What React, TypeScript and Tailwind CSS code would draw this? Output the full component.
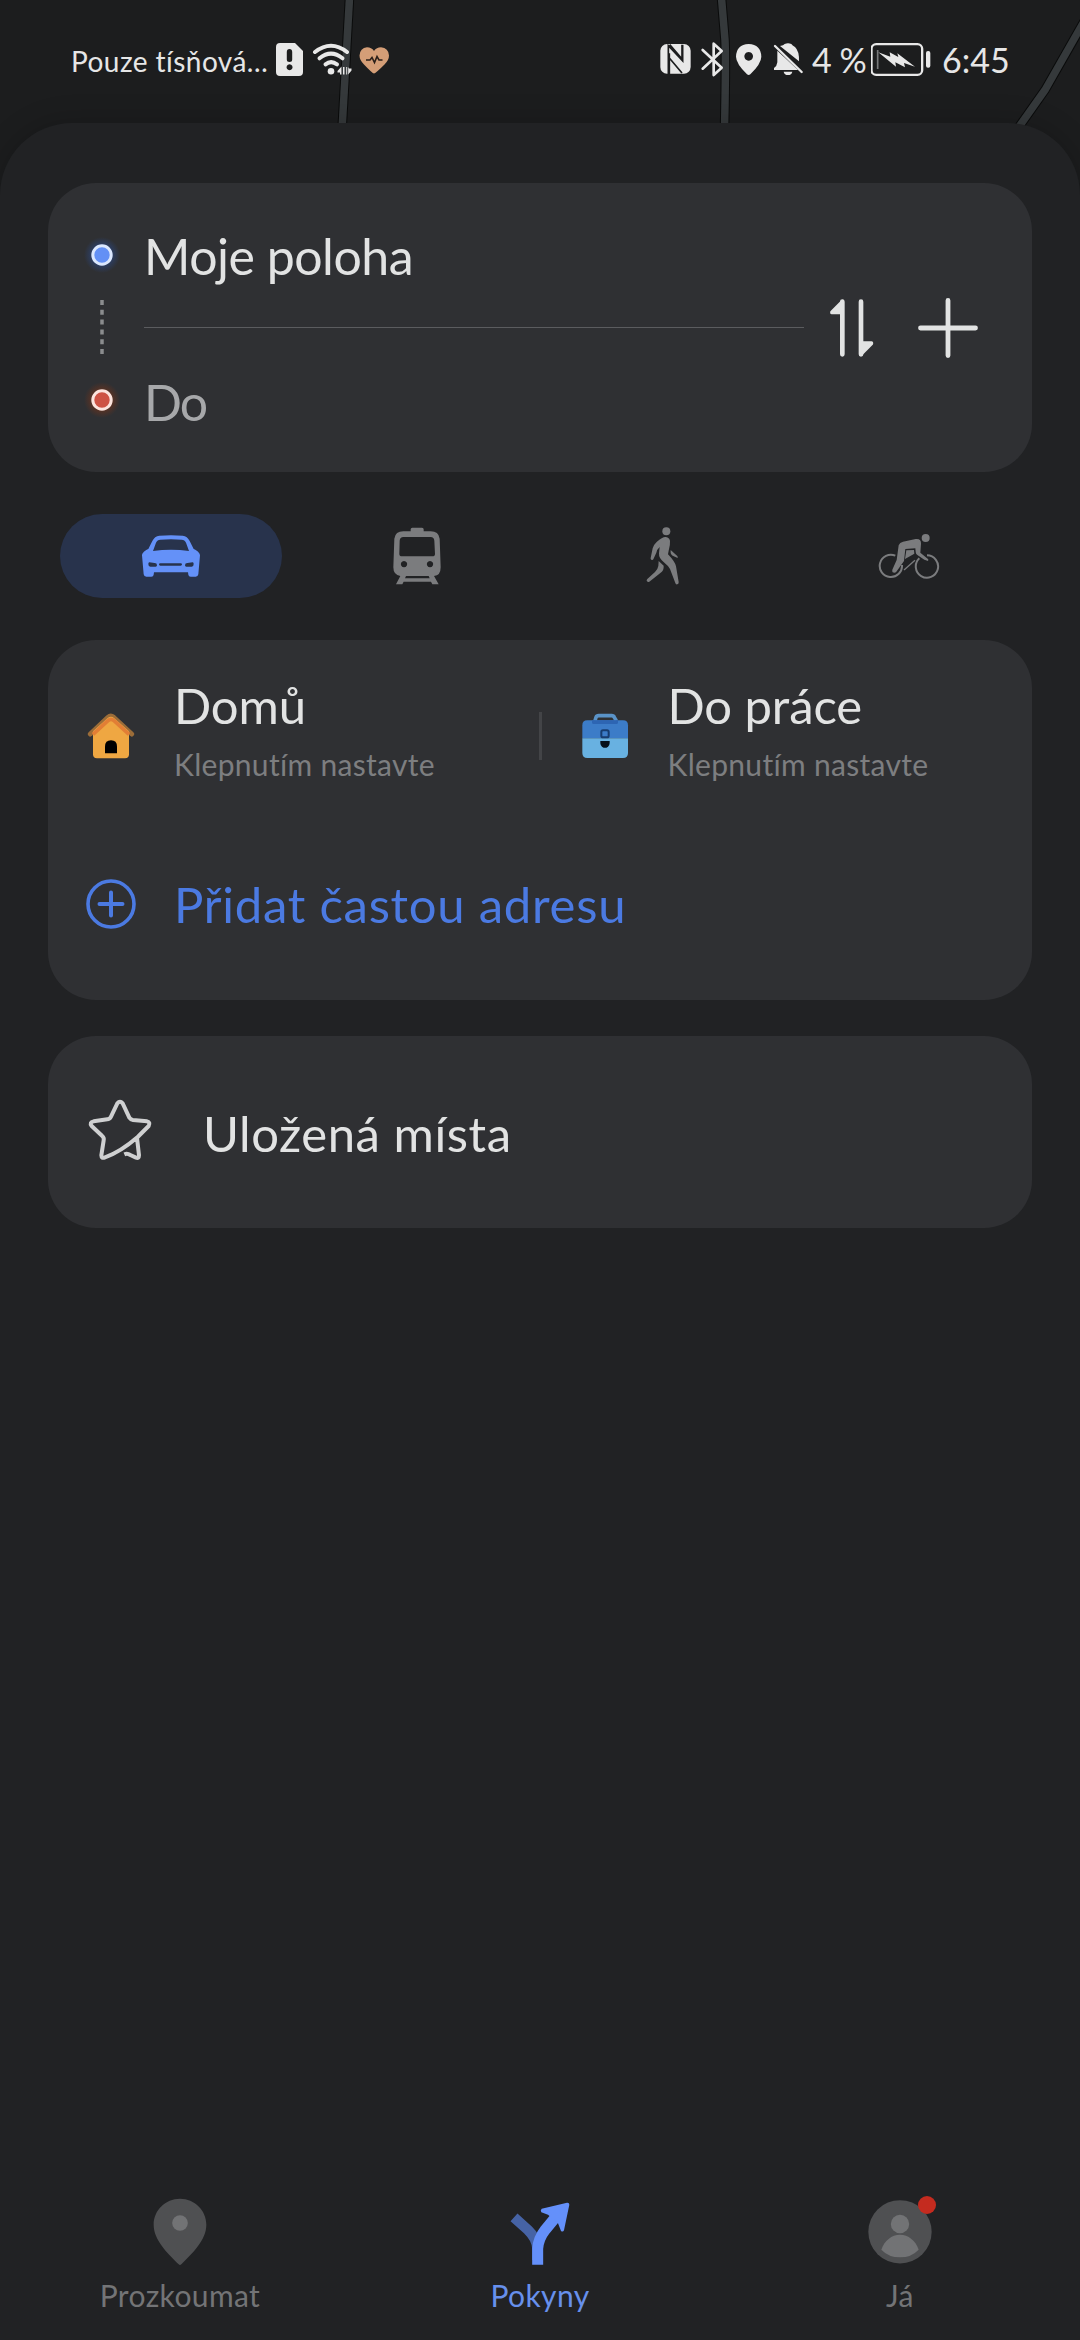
import React, { useState } from 'react';

type Mode = 'car' | 'transit' | 'walk' | 'bike';

const CarIcon = () => (
  <svg width="60" height="44" viewBox="303 101 180 132" fill="currentColor">
    <path
      fillRule="evenodd"
      d="M306 165C306 158 315 150 325 146L337 122Q344 107 358 106Q393 103 428 106Q442 107 449 122L461 146C471 150 480 158 480 165L475 222Q474 229 467 229H452Q446 229 445 223L444 216H342L341 223Q340 229 334 229H319Q312 229 311 222ZM339 152Q393 144 447 152L438 127Q434 118 425 118Q393 115 361 118Q352 118 348 127ZM328 186Q325 186 325 191Q325 199 331 199H347Q351 199 351 195Q351 188 344 188ZM458 186Q461 186 461 191Q461 199 455 199H439Q435 199 435 195Q435 188 442 188ZM361 189Q357 189 357 192.500Q357 196 361 196H422Q426 196 426 192.500Q426 189 422 189Z"
    />
  </svg>
);

const TrainIcon = () => (
  <svg width="50" height="60" viewBox="1056 76 150 180" fill="currentColor">
    <path
      fillRule="evenodd"
      d="M1112 92V86Q1112 81 1117 81H1146Q1151 81 1151 86V92H1172Q1196 92 1199 114L1202 200Q1202 225 1182 226L1196 251H1177L1173 243H1091L1087 251H1068L1081 226Q1060 223 1060 200L1063 114Q1066 92 1090 92ZM1090 109Q1080 109 1079 120L1078 160Q1078 167 1086 167H1177Q1185 167 1185 160L1183 120Q1182 109 1172 109ZM1092 181a9.500 9.500 0 1 0 .1 0ZM1170 181a9.500 9.500 0 1 0 .1 0ZM1098 226L1095 233H1169L1166 226Z"
    />
  </svg>
);

const WalkIcon = () => (
  <svg width="36" height="60" viewBox="136 78 108 180" fill="currentColor">
    <circle cx="200" cy="94" r="12" />
    <path d="M197 111Q208 111 211 122Q212 135 207 152L205 163Q226 185 229 199L237 246Q238 251 233 253Q228 254 227 249L211 207Q206 197 191 185Q177 174 178 160L180 141Q172 148 170 158L161 178Q159 181 155 179Q152 178 153 174L159 145Q162 134 171 126Q188 111 197 111Z" />
    <path d="M177 183L192 197Q193 212 183 218L149 245Q145 248 142 244Q139 241 143 237L166 216Q174 209 176 198Z" />
    <path d="M213 150L232 167Q235 170 234 174L219 167Q211 163 213 150Z" />
  </svg>
);

const BikeIcon = () => (
  <svg width="62" height="48" viewBox="834 96 186 144" fill="none" stroke="currentColor" strokeWidth="6">
    <circle cx="977" cy="114" r="12" fill="currentColor" stroke="none" />
    <path d="M886 167A33.500 33.500 0 1 0 906 195" />
    <path d="M958 175A33.500 33.500 0 1 0 981 166" />
    <path d="M912 210L945 181" strokeWidth="4" />
    <path
      fill="currentColor"
      stroke="none"
      d="M896 136Q899 127 909 125L947 117Q964 115 963 131L961 158L983 176Q987 179 984 183L973 179L951 164Q947 161 947 155L946 145L916 147L912 183L889 215Q885 220 878 217Q876 214 877 209L890 180Z"
    />
    <path fill="currentColor" stroke="none" d="M919 151L942 150L943 161L915 177Z" />
  </svg>
);

const HomeIcon = () => (
  <svg width="48" height="48" viewBox="141 245 144 144">
    <path d="M151 311L204 261Q212 254 221 261L275 311" fill="none" stroke="#9b6c38" strokeWidth="15" strokeLinecap="round" />
    <path d="M159 303L203 263Q213 255 222 263L267 303V372Q267 384 255 384H171Q159 384 159 372Z" fill="#efa742" />
    <path d="M159 312L204 271Q213 263 222 271L267 312" fill="none" stroke="#e27e35" strokeWidth="11" />
    <path d="M195 369V348Q195 330 213 330Q231 330 231 348V369Z" fill="#000" />
  </svg>
);

const WorkIcon = () => (
  <svg width="48" height="48" viewBox="180 188 144 144">
    <path d="M222 214L225 204Q227 199 233 199H272Q278 199 280 204L286 214" fill="none" stroke="#5a93c8" strokeWidth="11" />
    <path d="M184 267V228Q184 213 199 213H306Q321 213 321 228V267Z" fill="#3c7cc8" />
    <path d="M184 267H321V311Q321 326 306 326H199Q184 326 184 311Z" fill="#68b1e1" />
    <path d="M213 213H291V220Q291 224 286 224H218Q213 224 213 220Z" fill="#2d65b3" />
    <rect x="241" y="243" width="22" height="21" rx="5" fill="#3c7cc8" stroke="#173d70" strokeWidth="6" />
    <path d="M238 275H266V281Q266 288 261 292Q252 299 243 292Q238 288 238 281Z" fill="#06101c" />
  </svg>
);

const ExploreIcon = () => (
  <svg width="72" height="72" viewBox="252 48 216 216">
    <path d="M360 56C404 56 439 91 439 134C439 180 398 219 364 253Q360 257 356 253C322 219 281 180 281 134C281 91 316 56 360 56Z" fill="#4f5052" />
    <circle cx="360" cy="129" r="23.500" fill="#727375" />
  </svg>
);

const RouteIcon = () => (
  <svg width="72" height="72" viewBox="132 48 216 216">
    <path d="M162 112L204 150Q231 176 232 206V240" fill="none" stroke="#4663a5" strokeWidth="31" />
    <path d="M233 254V206Q235 176 256 149L288 110" fill="none" stroke="#6490fa" strokeWidth="33" />
    <path d="M245 86L321 68Q328 67 328 74L312 151Q309 157 303 153L294 130L264 104L244 97Q240 91 245 86Z" fill="#6490fa" />
  </svg>
);

const ProfileIcon = () => (
  <svg width="72" height="72" viewBox="102 48 216 216" className="overflow-visible">
    <circle cx="210" cy="155.500" r="95" fill="#4f5052" />
    <circle cx="210" cy="132" r="27.500" fill="#727375" />
    <path d="M154 209C163 182 185 164 210 164C235 164 257 182 266 209Q244 232 210 232Q176 232 154 209Z" fill="#727375" />
    <circle cx="291" cy="75" r="27" fill="#c42b1f" />
  </svg>
);

const StopDot = ({ fill, ring, glow }: { fill: string; ring: string; glow: string }) => (
  <svg width="48" height="48" viewBox="0 0 48 48">
    <defs>
      <radialGradient id={`glow-${glow.slice(1)}`}>
        <stop offset="0.5" stopColor={glow} stopOpacity="0.6" />
        <stop offset="1" stopColor={glow} stopOpacity="0" />
      </radialGradient>
    </defs>
    <circle cx="24" cy="24" r="18" fill={`url(#glow-${glow.slice(1)})`} />
    <circle cx="24" cy="24" r="9.200" fill={fill} stroke={ring} strokeWidth="3" />
  </svg>
);

const StatusBar = () => (
  <div className="relative flex h-[123px] items-start pt-[42px] pl-[71px] text-[#e6e6e6]">
    <span className="mt-[5px] w-[200px] text-[28px] leading-none tracking-[0.45px] whitespace-nowrap">Pouze tísňová…</span>
    <svg className="ml-[3px] shrink-0" width="120" height="36" viewBox="274 42 120 36" fill="#e8e8e8">
      <path fillRule="evenodd" d="M280 43H295L303 51V72Q303 76 299 76H280Q276 76 276 72V47Q276 43 280 43ZM289.500 49Q286.800 49 286.800 52V59.500Q286.800 62 289.500 62Q292.200 62 292.200 59.500V52Q292.200 49 289.500 49ZM289.500 64.300a3 3 0 1 0 .1 0Z" />
      <g fill="none" stroke="#e8e8e8" strokeWidth="4" strokeLinecap="round">
        <path d="M315 52Q331 39.500 347 52" />
        <path d="M319.500 58.300Q331 49 342.500 58.300" />
        <path d="M325.500 64.300Q331 60 337 64.300" />
      </g>
      <circle cx="331" cy="71.200" r="3.300" />
      <path d="M337.500 71L341.500 66.500V74.500H340V72.500H337.500ZM343 67H344.500V74.500H343ZM346.200 67H347.200V74.500H346.200ZM348.200 67V74.500L351.500 70.500V68.500H349Z" />
      <path d="M374 73.500Q372.500 73.500 364 64.500Q359.500 60 359.500 55.500Q360 48 367 47.300Q371.500 47.300 374 51Q376.500 47.300 381 47.300Q388.500 48 389 55.500Q389 60 384.500 64.500Q375.500 73.500 374 73.500Z" fill="#d49e77" />
      <path d="M366 60H370L372 57.500L374.500 62.500L377 56.500L379 60H382.500" fill="none" stroke="#2a1f19" strokeWidth="1.600" />
    </svg>

    <svg className="ml-[264px] shrink-0" width="146" height="36" viewBox="174 126 438 108" fill="#e8e8e8">
      {/* NFC */}
      <rect x="181" y="132" width="91" height="89" rx="20" />
      <path d="M205 222V137L248 183V134M209 134L247 178M208 160V222M208 174L246 219M246 134V178" fill="none" stroke="#1c1d1e" strokeWidth="5" />
      {/* Bluetooth */}
      <path d="M308 150L365 203L341 225V131L365 153L308 206" fill="none" stroke="#e8e8e8" strokeWidth="8" strokeLinejoin="round" strokeLinecap="round" />
      {/* Location */}
      <path fillRule="evenodd" d="M446 132Q483 134 484 170Q484 190 451 223Q446 227 441 223Q408 190 408 170Q409 134 446 132ZM446 156a13 13 0 1 0 .1 0Z" />
      {/* Muted bell */}
      <path d="M540 138Q551 136 554 132Q564 128 574 132Q577 136 585 141Q598 153 597 184ZM532 152L594 210H522V204Q531 198 532 187ZM551 215H577Q575 225 564 225Q553 225 551 215Z" />
      <path d="M525 138L605 216" stroke="#e8e8e8" strokeWidth="7" strokeLinecap="round" />
    </svg>
    <span className="mt-[1px] ml-2 w-[59px] shrink-0 text-[34px] leading-none tracking-[-0.4px] whitespace-nowrap">4 %</span>
    <svg className="shrink-0" width="62" height="36" viewBox="816 126 186 108">
      <rect x="817.500" y="132.500" width="152" height="92" rx="14" fill="none" stroke="#e8e8e8" strokeWidth="7" />
      <path d="M836 150V207" stroke="#77797a" strokeWidth="5" />
      <path d="M838 157L874 170L872 157L898 171L895 160L948 200L915 189L918 202L889 187L891 200Z" fill="#e8e8e8" />
      <rect x="981" y="153" width="13" height="50" rx="6" fill="#e8e8e8" />
    </svg>
    <span className="mt-[1px] ml-[9px] text-[34px] leading-none">6:45</span>
  </div>
);

const MapBackdrop = () => (
  <svg className="absolute top-0 left-0" width="1080" height="210" viewBox="0 0 1080 210" fill="none">
    <g stroke="#0a0b0b" strokeWidth="9.500">
      <path d="M349.500 -2L342 130" />
      <path d="M721.500 -2L725 40Q726 60 724.500 130" />
      <path d="M1086 18L1045 90L1016 131" />
    </g>
    <g stroke="#35393b" strokeWidth="7.500">
      <path d="M349.500 -2L342 130" />
      <path d="M721.500 -2L725 40Q726 60 724.500 130" />
      <path d="M1086 18L1045 90L1016 131" />
    </g>
  </svg>
);

const Place = ({ icon, title }: { icon: React.ReactNode; title: string }) => (
  <div className="flex flex-1 items-center pl-9">
    <div className="mt-3 flex w-[54px] justify-center">{icon}</div>
    <div className="ml-9">
      <p className="text-[49px] leading-[50px] tracking-[-0.1px]">{title}</p>
      <p className="mt-[19px] text-[30px] leading-none tracking-[0.3px] text-[#7d7e80]">Klepnutím nastavte</p>
    </div>
  </div>
);

const modes: { id: Mode; label: string; icon: React.ReactNode }[] = [
  { id: 'car', label: 'Auto', icon: <CarIcon /> },
  { id: 'transit', label: 'MHD', icon: <TrainIcon /> },
  { id: 'walk', label: 'Pěšky', icon: <WalkIcon /> },
  { id: 'bike', label: 'Kolo', icon: <BikeIcon /> },
];

const tabs = [
  { label: 'Prozkoumat', icon: <ExploreIcon />, color: 'text-[#737476]' },
  { label: 'Pokyny', icon: <RouteIcon />, color: 'text-[#6790ec]' },
  { label: 'Já', icon: <ProfileIcon />, color: 'text-[#737476]' },
];

const App: React.FC = () => {
  const [mode, setMode] = useState<Mode>('car');

  return (
    <div className="relative flex h-[2340px] w-[1080px] flex-col overflow-hidden bg-[#1c1d1e] font-['Lato','Noto_Sans',sans-serif] text-[#e2e3e3]">
      <MapBackdrop />
      <StatusBar />

      <main className="relative flex flex-1 flex-col rounded-t-[72px] bg-[#212224] px-12 pt-[60px] shadow-[0_0_30px_rgba(0,0,0,0.2)]">
        {/* Origin / destination */}
        <section className="flex h-[289px] shrink-0 rounded-[48px] bg-[#2f3033] pl-[30px]">
          <div className="flex w-12 flex-col items-center pt-12">
            <StopDot fill="#6390f5" ring="#dbe7fd" glow="#2a4a8c" />
            <svg className="mt-[21px] mb-[22px]" width="4" height="54" viewBox="0 0 4 54">
              <path d="M2 0V54" stroke="#8b8c8e" strokeWidth="3.500" strokeDasharray="5 4.800" />
            </svg>
            <StopDot fill="#cd5244" ring="#fbe3dd" glow="#7a3418" />
          </div>
          <div className="ml-[18px] w-[660px] pt-12">
            <p className="text-[50px] leading-none tracking-[-0.5px]">Moje poloha</p>
            <div className="mt-[46px] h-px bg-[#5b5c5f]" />
            <p className="mt-[49px] text-[50px] leading-none tracking-[-2px] text-[#a7a8aa]">Do</p>
          </div>
          <div className="flex items-center">
            <button className="ml-[26px]">
              <svg width="44" height="58" viewBox="150 148 132 174" fill="#e2e3e3" stroke="#e2e3e3" strokeLinejoin="round" strokeLinecap="round">
                <path d="M187 156V314M243 156V314" strokeWidth="14" />
                <path d="M187 155L155 187V189H187ZM243 314L275 282V279H243Z" strokeWidth="9" />
              </svg>
            </button>
            <button className="ml-11">
              <svg width="60" height="60" viewBox="0 0 60 60" stroke="#e2e3e3" strokeWidth="4.800" strokeLinecap="round">
                <path d="M30 2.500V57.500M2.500 30H57.500" />
              </svg>
            </button>
          </div>
        </section>

        {/* Travel modes */}
        <div className="mt-[42px] grid h-[84px] shrink-0 grid-cols-4">
          {modes.map((m) => (
            <button
              key={m.id}
              aria-label={m.label}
              onClick={() => setMode(m.id)}
              className={`mx-3 flex items-center justify-center rounded-full ${
                mode === m.id ? 'bg-[#28334c] text-[#6491f8]' : 'text-[#7b7c7e]'
              }`}
            >
              {m.icon}
            </button>
          ))}
        </div>

        {/* Frequent addresses */}
        <section className="mt-[42px] h-[360px] shrink-0 rounded-[48px] bg-[#2f3033] pt-10">
          <div className="flex items-center">
            <Place icon={<HomeIcon />} title="Domů" />
            <div className="mt-3 h-12 w-[3px] bg-[#434447]" />
            <Place icon={<WorkIcon />} title="Do práce" />
          </div>
          <button className="mt-[100px] flex items-center pl-9 text-[#4b7ae2]">
            <svg className="mx-[2px]" width="50" height="50" viewBox="0 0 50 50" fill="none" stroke="currentColor" strokeWidth="3.600" strokeLinecap="round">
              <circle cx="25" cy="25" r="23" />
              <path d="M25 13.500V36.500M13.500 25H36.500" strokeWidth="4" />
            </svg>
            <span className="ml-9 text-[49px] leading-[50px] tracking-[0.75px]">Přidat častou adresu</span>
          </button>
        </section>

        {/* Saved places */}
        <section className="mt-9 flex h-48 shrink-0 items-center rounded-[48px] bg-[#2f3033] pl-10">
          <svg className="-mt-1" width="64" height="62" viewBox="144 207 192 186" fill="none" stroke="#cfd0d1" strokeWidth="12" strokeLinejoin="round">
            <path d="M253 373Q262 369 271 375L288 383Q297 386 297 376L291 324M293 321L326 288Q332 277 321 274L279 270Q272 269 268 263L248 220Q240 211 232 220L213 260Q209 268 202 268L161 274Q147 277 155 288L186 317Q193 323 191 331L184 376Q184 387 195 382Q241 366 293 321Z" />
          </svg>
          <span className="mt-[2px] ml-[51px] text-[49px] leading-[50px] tracking-[0.55px]">Uložená místa</span>
        </section>

        <nav className="-mx-12 mt-auto grid h-36 grid-cols-3">
          {tabs.map((tab) => (
            <button key={tab.label} className={`flex flex-col items-center ${tab.color}`}>
              {tab.icon}
              <span className="mt-3 text-[30px] leading-none tracking-[0.4px]">{tab.label}</span>
            </button>
          ))}
        </nav>
      </main>
    </div>
  );
};

export default App;
